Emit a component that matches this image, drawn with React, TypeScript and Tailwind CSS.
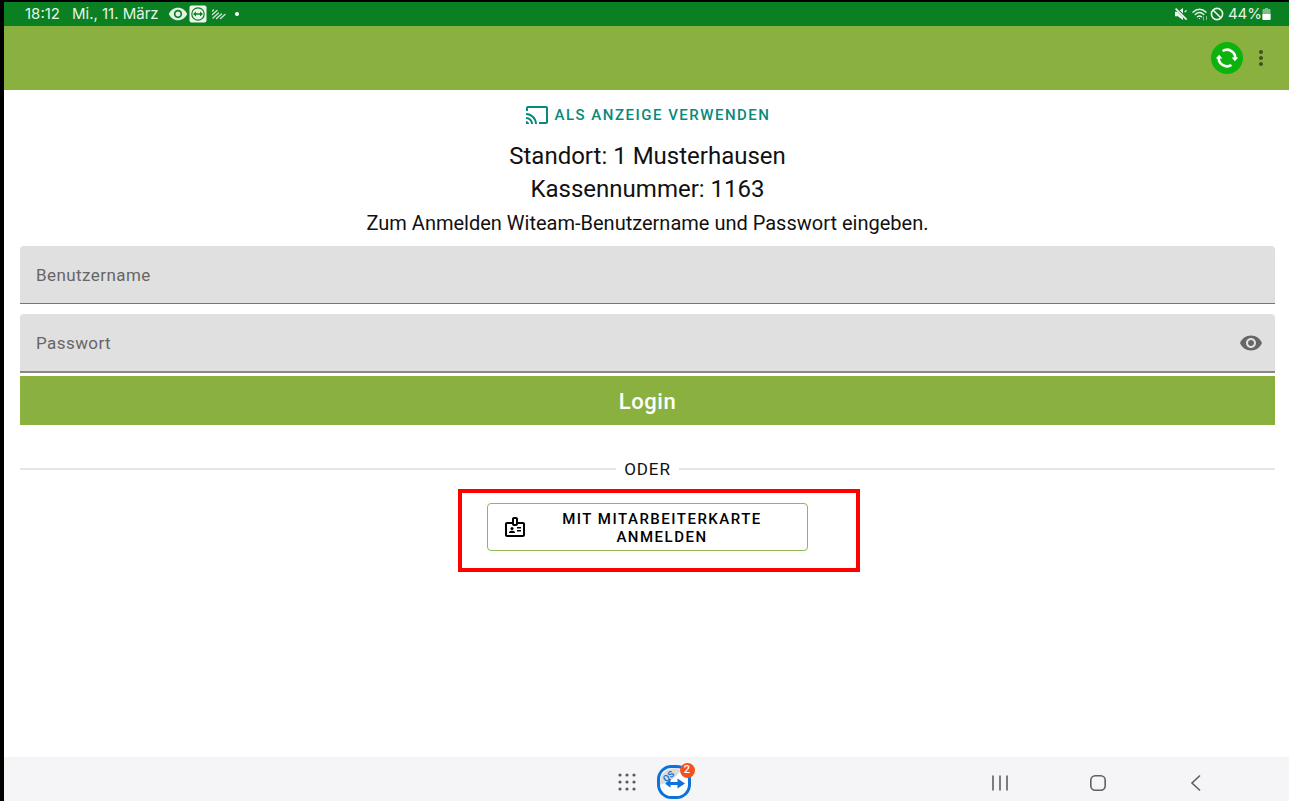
import type { ReactNode } from "react";
import { MdCast, MdMoreVert, MdOutlineBadge, MdVisibility } from "react-icons/md";

function RemoteIcon() {
    return (
        <svg viewBox="0 0 18 18" className="w-[18px] h-[18px]">
            <rect x="0.5" y="0.5" width="17" height="17" rx="2" fill="#eef7ee" />
            <circle cx="9" cy="9" r="6.2" fill="none" stroke="#0a8023" strokeWidth="1.2" />
            <path d="M4 9l3-2.6v1.9h4V6.4L14 9l-3 2.6V9.7H7v1.9z" fill="#0a8023" />
        </svg>
    );
}

function StripesIcon() {
    return (
        <svg viewBox="0 0 16 14" className="w-4 h-[14px]" fill="none" stroke="#d5ead8" strokeWidth="1.3" strokeLinecap="round">
            <path d="M1.5 7.5L6 3.5M2 11L7.5 6M5.5 11.5L10.5 7M9.5 11.5L14 7.5" />
            <path d="M1.5 4l1-1" />
        </svg>
    );
}

function MuteIcon() {
    return (
        <svg viewBox="0 0 14 14" className="w-[14px] h-[14px]">
            <path d="M1 4.8h2.8L9 1v12L3.8 9.2H1z" fill="#f0f8f0" />
            <path d="M1.8 1.2l11 11" stroke="#0a8023" strokeWidth="3" />
            <path d="M1.6 1.6l11 11" stroke="#f0f8f0" strokeWidth="1.6" />
            <path d="M10.6 5l2-1.6" stroke="#f0f8f0" strokeWidth="1.2" />
        </svg>
    );
}

function WifiIcon() {
    return (
        <svg viewBox="0 0 17 14" className="w-[17px] h-[14px]" fill="none" stroke="#e3f1e4" strokeWidth="1.4" strokeLinecap="round">
            <path d="M1 5.2C4.8 1.2 10.2 1.2 14 5.2M3.2 7.6C5.8 5 9.2 5 11.8 7.6M5.4 9.8C6.8 8.6 8.2 8.6 9.6 9.8" />
            <circle cx="7.5" cy="11.6" r="0.7" fill="#e3f1e4" stroke="none" />
            <path d="M11.5 10v3M14.5 12.5v-3" strokeWidth="1" stroke="#8cc294" />
        </svg>
    );
}

function BlockedIcon() {
    return (
        <svg viewBox="0 0 14 14" className="w-[14px] h-[14px]" fill="none" stroke="#f0f8f0" strokeWidth="1.6">
            <circle cx="7" cy="7" r="5.6" />
            <path d="M3 3l8 8" />
        </svg>
    );
}

function BatteryIcon() {
    return (
        <svg viewBox="0 0 9 12" className="w-[9px] h-3">
            <path d="M3 0h3v1h1.5a1 1 0 011 1v9a1 1 0 01-1 1h-6a1 1 0 01-1-1V2a1 1 0 011-1H3z" fill="#84bd8c" />
            <path d="M0.5 6h8v5a1 1 0 01-1 1h-6a1 1 0 01-1-1z" fill="#fff" />
        </svg>
    );
}

function SyncIcon() {
    return (
        <svg viewBox="0 0 32 32" className="w-8 h-8">
            <circle cx="16" cy="16" r="16" fill="#0cb30c" />
            <g fill="none" stroke="#fff" strokeWidth="2.6">
                <path d="M11.6 9A8.3 8.3 0 0 1 24.3 16" />
                <path d="M20.4 23A8.3 8.3 0 0 1 7.7 16" />
            </g>
            <path d="M20.6 15.4h6.6L23.9 19.2zM4.8 16.6h6.6L8.1 12.8z" fill="#fff" />
        </svg>
    );
}

function AppsIcon() {
    const steps = [2, 9, 16];
    return (
        <svg viewBox="0 0 18 18" className="w-[18px] h-[18px]" fill="#5c5c5e">
            {steps.map((y) => steps.map((x) => <circle key={`${x}-${y}`} cx={x} cy={y} r="1.6" />))}
        </svg>
    );
}

function QuickSupportIcon() {
    return (
        <svg viewBox="0 0 34 34" className="w-[34px] h-[34px]">
            <rect x="1.5" y="1.5" width="31" height="31" rx="13" fill="#fff" stroke="#0d72d9" strokeWidth="3" />
            <path d="M3.2 20C2.4 9 8 3 20 3.2L23.5 5.5C20 12 12 17 3.2 20z" fill="#d9dcdf" />
            <text x="11.5" y="14.5" transform="rotate(-40 11.5 11.5)" textAnchor="middle" fontSize="9" fontWeight="700" fontFamily="Roboto, sans-serif" fill="#1a77cf">
                QS
            </text>
            <path d="M8.5 18l5-3.8v2.9h7v-3.7l7.5 5.1-7.5 5.1v-3.7h-7v2.9l-5-3.8z" fill="#0d72d9" />
        </svg>
    );
}

function NavButton({ label, children }: { label: string; children: ReactNode }) {
    return (
        <button aria-label={label} className="w-6 h-6">
            <svg viewBox="0 0 24 24" className="w-6 h-6" fill="none" stroke="#5f5f62" strokeWidth="1.6">
                {children}
            </svg>
        </button>
    );
}

function StatusBar() {
    return (
        <div className="flex items-center justify-between h-6 pl-[21px] pr-[18px] bg-[#0a8023] text-[#e6f3e7] text-[15px] leading-6 font-[Inter,sans-serif]">
            <div className="flex items-center">
                <span>18:12</span>
                <span className="ml-3">Mi., 11. März</span>
                <MdVisibility size={20} className="ml-[9px]" />
                <span className="ml-px">
                    <RemoteIcon />
                </span>
                <span className="ml-1">
                    <StripesIcon />
                </span>
                <span className="ml-2 w-1 h-1 rounded-full bg-white" />
            </div>
            <div className="flex items-center">
                <MuteIcon />
                <span className="ml-1">
                    <WifiIcon />
                </span>
                <span className="ml-px">
                    <BlockedIcon />
                </span>
                <span className="ml-1">44%</span>
                <BatteryIcon />
            </div>
        </div>
    );
}

export default function App() {
    return (
        <div className="flex flex-col min-h-screen bg-white border-l-4 border-t-2 border-black text-[#111] font-[Roboto,sans-serif]">
            <StatusBar />
            <header className="flex items-center justify-end h-16 pr-4 gap-[6px] bg-[#8ab140]">
                <button aria-label="Synchronisieren">
                    <SyncIcon />
                </button>
                <button aria-label="Menü" className="text-[#41501f]">
                    <MdMoreVert size={24} />
                </button>
            </header>

            <main className="flex-1 flex flex-col items-center pl-4 pr-[14px] pt-[13px]">
                <button className="flex items-center gap-[6px] h-6 text-[15px] font-medium tracking-widest text-[#078a7c]">
                    <MdCast size={24} />
                    ALS ANZEIGE VERWENDEN
                </button>
                <h1 className="mt-[13px] text-2xl leading-[33px] text-center">
                    Standort: 1 Musterhausen
                    <br />
                    Kassennummer: 1163
                </h1>
                <p className="text-xl leading-[34px]">Zum Anmelden Witeam-Benutzername und Passwort eingeben.</p>

                <form className="w-full mt-[6px]" onSubmit={(e) => e.preventDefault()}>
                    <input
                        type="text"
                        aria-label="Benutzername"
                        placeholder="Benutzername"
                        className="block w-full h-[58px] px-4 rounded-t bg-[#e0e0e0] border-b border-[#777] text-[17px] tracking-wide placeholder:text-[#666] outline-none"
                    />
                    <div className="flex items-center h-[59px] mt-[10px] pl-4 pr-3 rounded-t bg-[#e0e0e0] border-b-2 border-[#888]">
                        <input
                            type="password"
                            aria-label="Passwort"
                            placeholder="Passwort"
                            className="flex-1 h-full bg-transparent text-[17px] tracking-wide placeholder:text-[#666] outline-none"
                        />
                        <button type="button" aria-label="Passwort anzeigen" className="text-[#666]">
                            <MdVisibility size={24} />
                        </button>
                    </div>
                    <button type="submit" className="block w-full h-[49px] mt-[3px] pt-[2px] bg-[#8ab140] text-white text-[22px] font-medium tracking-wide">
                        Login
                    </button>
                </form>

                <div className="flex items-center w-full gap-2 mt-8">
                    <div className="flex-1 h-[2px] bg-[#e6e6e6]" />
                    <span className="text-[17px] leading-6 tracking-wider">ODER</span>
                    <div className="flex-1 h-[2px] bg-[#e6e6e6]" />
                </div>

                <div className="ml-[23px] mt-2 pt-[10px] pb-[17px] pl-[25px] pr-12 border-4 border-[#fe0000]">
                    <button className="flex items-center w-[321px] h-12 pl-[15px] pr-4 border border-[#8fb955] rounded text-black">
                        <MdOutlineBadge size={24} />
                        <span className="flex-1 pt-px pl-[6px] text-[15px] leading-[18px] font-medium tracking-widest">
                            MIT MITARBEITERKARTE
                            <br />
                            ANMELDEN
                        </span>
                    </button>
                </div>
            </main>

            <nav className="grid grid-cols-[1fr_auto_1fr] items-center h-11 bg-[#f5f5f7]">
                <div />
                <div className="flex items-center gap-[21px] pl-[15px] pt-[6px]">
                    <button aria-label="Alle Apps">
                        <AppsIcon />
                    </button>
                    <button aria-label="QuickSupport" className="relative">
                        <QuickSupportIcon />
                        <span className="absolute -top-[2px] -right-1 flex items-center justify-center w-[15px] h-[15px] rounded-full bg-[#f4511e] text-white text-[11px] font-medium">
                            2
                        </span>
                    </button>
                </div>
                <div className="flex justify-end gap-[74px] pr-[81px] pt-2">
                    <NavButton label="Letzte Apps">
                        <path d="M5 4.5v15M12 4.5v15M19 4.5v15" />
                    </NavButton>
                    <NavButton label="Startbildschirm">
                        <rect x="4.8" y="4.8" width="14.4" height="14.4" rx="4.5" />
                    </NavButton>
                    <NavButton label="Zurück">
                        <path d="M16 4.5L8 12l8 7.5" />
                    </NavButton>
                </div>
            </nav>
        </div>
    );
}
